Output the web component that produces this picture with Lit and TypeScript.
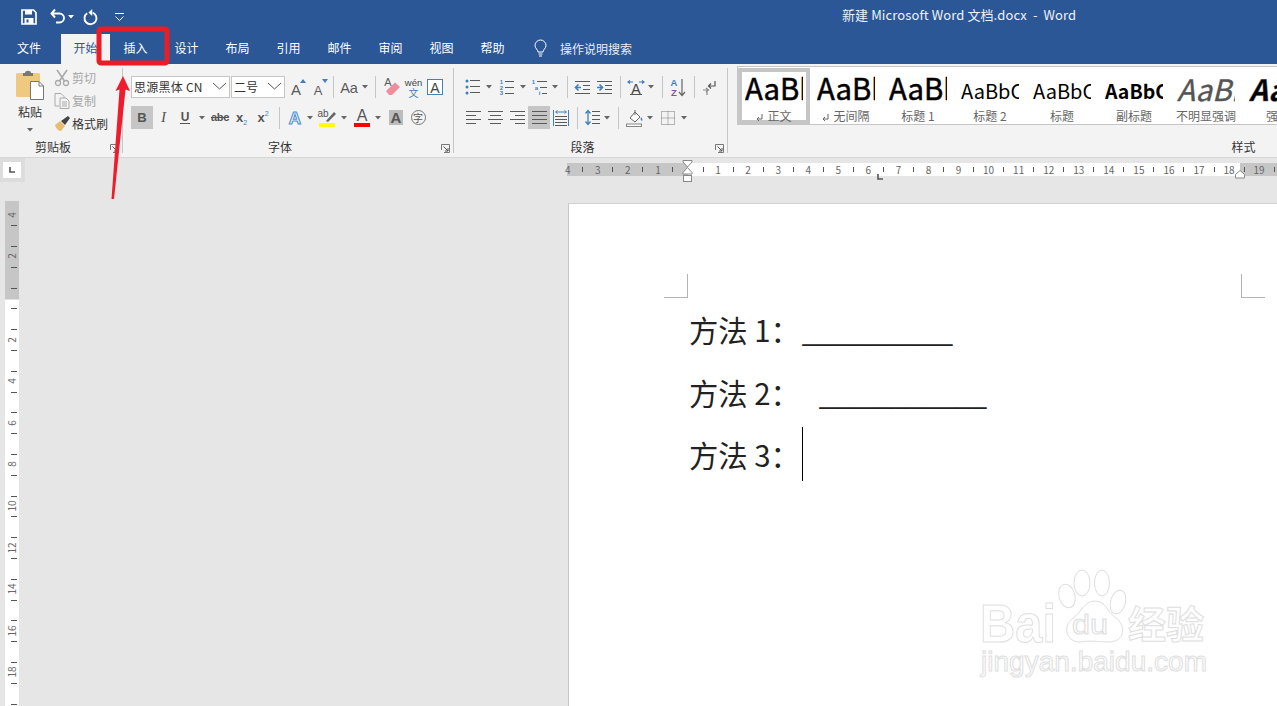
import { LitElement, html, css, svg } from 'lit';
import { customElement } from 'lit/decorators.js';

const G = '#5a5a5a';
const B = '#3f7fbf';

// every ribbon button is a fixed cell with a centred svg inside
const icon = (w: number, h: number, body: unknown) =>
  html`<svg width=${w} height=${h} viewBox="0 0 ${w} ${h}">${body}</svg>`;

const letter = (t: string, x: number, y: number, size: number, fill = G, extra = '') =>
  svg`<text x=${x} y=${y} font-size=${size} fill=${fill} font-family="Liberation Sans, sans-serif" text-anchor="middle" style=${extra}>${t}</text>`;

const lines = (x1: number, x2: number, ys: number[], color = G) =>
  ys.map((y) => svg`<path d="M${x1} ${y}.5H${x2}" stroke=${color} fill="none"/>`);

const launcher = html`<svg class="launch" width="9" height="9" viewBox="0 0 9 9">
  <path d="M.5 6V.5H8.5M8.5 .5V8.5H3" fill="none" stroke="#777"/><path d="M2.5 2.5L7 7M7 4V7H4" fill="none" stroke="#555"/>
</svg>`;

const caret = html`<svg width="6" height="4" viewBox="0 0 6 4"><path d="M0 0H6L3 3.5Z" fill="#666"/></svg>`;
const chevron = html`<svg width="15" height="8" viewBox="0 0 15 8"><path d="M1 1L7.5 7L14 1" fill="none" stroke="#555"/></svg>`;
const enterMark = html`<svg class="ret" width="7" height="8" viewBox="0 0 7 8"><path d="M6 0V5H1M3 3L1 5L3 7" fill="none" stroke="#666"/></svg>`;

const ic = {
  grow: icon(18, 20, [letter('A', 7, 18, 15), svg`<path d="M11 6L14 2L17 6Z" fill=${B}/>`]),
  shrink: icon(18, 20, [letter('A', 7, 18, 13), svg`<path d="M11 2L14 6L17 2Z" fill=${B}/>`]),
  aa: icon(18, 18, letter('Aa', 9, 15, 14.5)),
  eraser: icon(18, 22, [
    letter('A', 5, 10, 11),
    svg`<path d="M3 15L12 6.5L17 11L9 19H6Z" fill="#ee8d9e"/>`,
  ]),
  wen: html`<span class="wen"><i>wén</i><b>文</b></span>`,
  box: icon(17, 17, [
    svg`<rect x=".5" y=".5" width="15" height="15" fill="#fff" stroke="#4a7fb0"/>`,
    letter('A', 8, 13.5, 14, '#444'),
  ]),
  bold: html`<span class="t bold">B</span>`,
  ital: html`<span class="t ital">I</span>`,
  under: html`<span class="t und">U</span>`,
  abc: html`<span class="t strike">abc</span>`,
  sub: html`<span class="t script"><b>x</b><i class="lo">2</i></span>`,
  sup: html`<span class="t script"><b>x</b><i class="hi">2</i></span>`,
  effect: icon(18, 18, svg`<text x="9" y="15" font-size="17" font-weight="700" text-anchor="middle" font-family="Liberation Sans, sans-serif" fill="#fff" stroke="#4d8fd6" stroke-width="1.1">A</text>`),
  high: icon(18, 20, [
    letter('ab', 5, 9, 10, '#555'),
    svg`<path d="M8 13L16 4L18 6L10 14Z" fill="#666"/>`,
    svg`<rect x="1" y="15" width="16" height="4" fill="#ffff00"/>`,
  ]),
  color: icon(18, 20, [letter('A', 9, 13, 16, '#555'), svg`<rect x="1" y="15" width="16" height="4" fill="#ff0000"/>`]),
  shade: icon(14, 15, [svg`<rect width="14" height="15" fill="#bcbcbc"/>`, letter('A', 7, 13, 15, '#555', 'font-weight:700')]),
  circle: html`<span class="enc">字</span>`,
  bullets: icon(16, 16, [
    [2, 8, 14].map((y) => svg`<circle cx="2" cy=${y} r="1.5" fill=${B}/>`),
    lines(5, 15, [1, 7, 13]),
  ]),
  numbers: icon(16, 16, [
    ['1', '2', '3'].map((n, i) => letter(n, 2.5, 5 + i * 5.5, 6, B, 'font-weight:700')),
    lines(6, 15, [2, 8, 14]),
  ]),
  multi: icon(17, 16, [
    letter('1', 2.5, 5, 6, B, 'font-weight:700'),
    letter('a', 5.5, 10.5, 6, B, 'font-weight:700'),
    letter('i', 8.5, 16, 6, B, 'font-weight:700'),
    lines(6, 16, [2]),
    lines(9, 16, [8]),
    lines(11, 16, [14]),
  ]),
  outdent: icon(17, 13, [
    lines(1, 16, [0, 12]),
    lines(9, 16, [4, 8]),
    svg`<path d="M7 6.5H1.5M4.5 3.5L1.5 6.5L4.5 9.5" fill="none" stroke=${B} stroke-width="1.6"/>`,
  ]),
  indent: icon(17, 13, [
    lines(1, 16, [0, 12]),
    lines(9, 16, [4, 8]),
    svg`<path d="M1 6.5H6.5M3.5 3.5L6.5 6.5L3.5 9.5" fill="none" stroke=${B} stroke-width="1.6"/>`,
  ]),
  cjk: icon(18, 15, [
    svg`<path d="M6 2H1.5M3 .5L1 2L3 3.5M12 2H16.5M15 .5L17 2L15 3.5" fill="none" stroke=${B} stroke-width="1.2"/>`,
    letter('A', 9, 14, 14, '#444', 'font-weight:400'),
    svg`<path d="M3 14.5H15" stroke="#555"/>`,
  ]),
  sort: icon(18, 19, [
    letter('A', 5, 8, 9.5, B, 'font-weight:700'),
    letter('Z', 5, 18, 9.5, '#8a4fb5', 'font-weight:700'),
    svg`<path d="M13 1V17M10 14L13 17.5L16 14" fill="none" stroke="#666" stroke-width="1.2"/>`,
  ]),
  para: icon(14, 15, [
    svg`<path d="M13 1V6H7M9 3.5L6.5 6L9 8.5" fill="none" stroke="#555" stroke-width="1.2"/>`,
    svg`<path d="M1 10H6M4 8L6.5 10L4 12M5 11V15" fill="none" stroke="#888" stroke-width="1.2"/>`,
  ]),
  left: icon(15, 14, [lines(0, 15, [0, 8]), lines(0, 10, [4, 12])]),
  center: icon(15, 14, [lines(0, 15, [0, 8]), lines(2, 13, [4, 12])]),
  right: icon(15, 14, [lines(0, 15, [0, 8]), lines(5, 15, [4, 12])]),
  just: icon(15, 14, lines(0, 15, [0, 4, 8, 12])),
  dist: icon(16, 16, [
    svg`<path d="M.5 0V16M15.5 0V16" stroke=${B}/><path d="M3 2H13M4.5 .5L2.5 2L4.5 3.5M11.5 .5L13.5 2L11.5 3.5" fill="none" stroke=${B}/>`,
    lines(2, 14, [6, 9, 12, 15]),
  ]),
  spacing: icon(15, 17, [
    svg`<path d="M3 2V15M.5 4.5L3 1.5L5.5 4.5M.5 12.5L3 15.5L5.5 12.5" fill="none" stroke=${B} stroke-width="1.3"/>`,
    lines(7, 15, [2, 6, 10, 14]),
  ]),
  fill: icon(17, 18, [
    svg`<path d="M4 9L9 3L14 8L9 13Z" fill="#fff" stroke="#666"/><path d="M9 1L9 6" stroke="#666"/><path d="M15 8C16.5 10 17 11 15.7 12C14.5 11 14.5 10 15 8Z" fill=${B}/>`,
    svg`<rect x=".5" y="15" width="15" height="2.5" fill="#fff" stroke="#888"/>`,
  ]),
  borders: icon(14, 14, svg`<rect x=".5" y=".5" width="13" height="13" fill="none" stroke="#777" stroke-dasharray="1 1"/><path d="M7 .5V13.5M.5 7H13.5" stroke="#777" stroke-dasharray="1 1"/>`),
};

type Cell = [number, unknown, number?, boolean?]; // width, content, margin-left, pressed

const fontTop: Cell[] = [
  [22, ic.grow, 2], [22, ic.shrink], [0, null, 2], [22, ic.aa, 4], [9, caret], [0, null, 6],
  [22, ic.eraser, 5], [21, ic.wen], [22, ic.box],
];
const fontBottom: Cell[] = [
  [22, ic.bold, 0, true], [21, ic.ital], [22, ic.under], [11, caret], [22, ic.abc, 2], [21, ic.sub], [22, ic.sup],
  [0, null, 5], [22, ic.effect, 4], [8, caret], [22, ic.high, 2], [10, caret, 1], [22, ic.color, 2], [10, caret],
  [22, ic.shade, 2], [22, ic.circle],
];
const paraTop: Cell[] = [
  [22, ic.bullets], [10, caret], [22, ic.numbers, 2], [10, caret], [22, ic.multi], [10, caret], [0, null, 7],
  [22, ic.outdent, 3], [22, ic.indent], [0, null, 5], [22, ic.cjk, 4], [8, caret], [0, null, 7], [22, ic.sort, 4],
  [0, null, 5], [22, ic.para, 3],
];
const paraBottom: Cell[] = [
  [22, ic.left], [22, ic.center], [22, ic.right], [22, ic.just, 0, true], [22, ic.dist], [0, null, 5],
  [22, ic.spacing, 3], [8, caret], [0, null, 7], [22, ic.fill, 4], [10, caret], [22, ic.borders, 2], [10, caret],
];

const styleItems = [
  { label: '正文', cls: 'big', mark: true, on: true },
  { label: '无间隔', cls: 'big', mark: true },
  { label: '标题 1', cls: 'big' },
  { label: '标题 2', cls: 'mid' },
  { label: '标题', cls: 'mid' },
  { label: '副标题', cls: 'mid strong' },
  { label: '不明显强调', cls: 'soft' },
  { label: '强调', cls: 'soft loud' },
];

const tabs = ['插入', '设计', '布局', '引用', '邮件', '审阅', '视图', '帮助'];
const hNums = [
  ...[4, 3, 2, 1].map((n) => ({ n, at: -n })),
  ...Array.from({ length: 19 }, (_, i) => ({ n: i + 1, at: i + 1 })),
];
const vNums = [-4, -2, 2, 4, 6, 8, 10, 12, 14, 16, 18];

@customElement('app-root')
export class AppRoot extends LitElement {
  static styles = css`
    :host {
      display: block;
      position: relative;
      width: 1277px;
      height: 706px;
      overflow: hidden;
      background: #e6e6e6;
      font-family: 'Noto Sans CJK SC', 'Noto Sans', sans-serif;
      font-size: 12px;
      color: #444;
    }
    svg { display: block; overflow: visible; }

    .title { display: flex; align-items: center; height: 33px; background: #2b5797; padding-left: 20px; color: #fff; }
    .qat-save { margin-left: 1px; }
    .qat-undo { margin-left: 13px; }
    .qat-caret { margin-left: 3px; }
    .qat-redo { margin-left: 9px; }
    .qat-more { margin-left: 17px; }
    .doc-name { position: relative; top: -2px; margin-left: 718px; font-size: 13px; letter-spacing: .1px; white-space: pre; color: #eef2f8; }

    .tabs { display: flex; height: 31px; background: #2b5797; color: #fff; }
    .tab { display: flex; align-items: center; justify-content: center; width: 51px; height: 30px; margin-top: 1px; padding-bottom: 3px; box-sizing: border-box; }
    .tab.file { width: 61px; padding-right: 3px; }
    .tab.home { width: 49px; background: #f3f3f3; color: #2b5797; }
    .bulb { margin-left: 16px; align-self: center; }
    .search { margin-left: 13px; align-self: center; color: #e8edf5; }

    .ribbon { display: flex; height: 93px; background: #f3f3f3; border-bottom: 1px solid #d6d6d6; overflow: hidden; }
    .group { position: relative; flex: none; display: flex; flex-direction: column; margin: 4px 0; box-sizing: border-box; border-right: 1px solid #c6c6c6; }
    .clip { width: 123px; }
    .font { width: 331px; padding-left: 8px; }
    .para { width: 274px; padding-left: 8px; }
    .styles { width: 1046px; padding-left: 9px; border-right: none; }
    .label { margin-top: auto; height: 17px; box-sizing: border-box; padding: 5px 16px 0 0; line-height: 12px; text-align: center; color: #333; }
    .font .label, .para .label, .styles .label { padding-right: 24px; }
    .launch { position: absolute; right: 3px; bottom: 0; }

    .clip-body { display: flex; margin-top: -2px; }
    .paste { display: flex; flex-direction: column; align-items: center; width: 32px; margin: 4px 0 0 14px; color: #333; }
    .paste span { margin-top: 3px; line-height: 18px; }
    .paste svg:last-child { margin-top: 7px; }
    .small { margin-left: 8px; }
    .small div { display: flex; align-items: center; height: 23px; color: #a6a6a6; }
    .small div svg { width: 18px; }
    .small .on { color: #333; }

    .row { display: flex; align-items: center; height: 22px; }
    .row.first { margin-top: 8px; }
    .row.second { margin-top: 8px; height: 23px; }
    .select { display: flex; align-items: center; justify-content: space-between; box-sizing: border-box; height: 22px; background: #fff; border: 1px solid #c6c6c6; padding: 0 2px 2px 2px; color: #333; white-space: nowrap; }
    .select.name { width: 99px; letter-spacing: .25px; }
    .select.size { width: 54px; margin-left: 1px; }
    .cell { display: flex; align-items: center; justify-content: center; flex: none; height: 100%; }
    .cell.on { background: #c6c6c6; }
    .sep { flex: none; width: 1px; height: 22px; background: #c6c6c6; }

    .t { font-family: 'Liberation Sans', sans-serif; color: #555; line-height: 1; }
    .bold { font-weight: 700; font-size: 13px; }
    .ital { font-family: 'Liberation Serif', serif; font-style: italic; font-size: 15px; }
    .und { font-weight: 700; font-size: 12px; border-bottom: 1px solid #555; padding: 0 1px; }
    .strike { font-size: 11px; font-weight: 700; text-decoration: line-through; letter-spacing: -.3px; }
    .script b { font-size: 13px; }
    .script i { font-size: 7px; font-style: normal; color: #3f7fbf; position: relative; }
    .script .lo { top: 3px; }
    .script .hi { top: -6px; }
    .wen { display: flex; flex-direction: column; align-items: center; line-height: 10px; }
    .wen i { font: 9.5px 'Liberation Sans', sans-serif; color: #444; }
    .wen b { font-size: 10px; font-weight: 400; color: #3f7fbf; }
    .enc { display: flex; align-items: center; justify-content: center; box-sizing: border-box; width: 15px; height: 15px; border: 1px solid #777; border-radius: 50%; font-size: 10px; color: #555; }

    .gallery { display: flex; height: 59px; box-sizing: border-box; margin-top: -2px; padding-top: 1px; background: #fff; border: 1px solid #c6c6c6; border-right: none; }
    .style { box-sizing: border-box; flex: none; width: 72px; height: 56px; padding: 0 0 0 3px; border: 4px solid transparent; }
    .style.on { border-color: #c6c6c6; }
    .preview { width: 58px; height: 37px; overflow: hidden; white-space: nowrap; color: #000; line-height: 30px; font-size: 29.3px; }
    .preview.big { -webkit-text-stroke: .5px #000; }
    .preview.mid { font-size: 20px; line-height: 37px; }
    .preview.strong { font-weight: 700; font-size: 19.5px; }
    .preview.soft { font-style: italic; font-size: 29.3px; color: #555; line-height: 32px; -webkit-text-stroke: .4px #555; }
    .preview.loud { color: #000; font-weight: 700; }
    .cap { display: flex; align-items: center; justify-content: center; gap: 4px; height: 14px; margin-left: -3px; color: #666; line-height: 14px; white-space: nowrap; }
    .ret { margin-top: 3px; }

    .work { display: flex; height: 548px; }
    .side { flex: none; width: 567px; }
    .corner-row { height: 43px; }
    .corner { display: flex; box-sizing: border-box; width: 25px; height: 24px; padding: 4px 4px 4px 3px; background: #dcdcdc; }
    .corner span { flex: 1; background: #fff; display: flex; align-items: center; justify-content: center; }
    .vruler { position: relative; width: 14px; height: 505px; margin-left: 5px; background: linear-gradient(#c6c6c6 98px, #fff 99px); overflow: hidden; }
    .vtick { position: absolute; left: 6px; width: 6px; height: 1px; background: #555; }
    .vnum { position: absolute; left: 0; width: 14px; height: 12px; line-height: 12px; margin-top: -6px; text-align: center; font-size: 10px; color: #666; transform: rotate(-90deg); }

    .main { flex: none; width: 710px; display: flex; flex-direction: column; }
    .hruler-wrap { flex: none; height: 45px; box-sizing: border-box; padding-top: 5px; }
    .hruler { position: relative; height: 13px; background: linear-gradient(90deg, #c6c6c6 121px, #fff 121px, #fff 673px, #c6c6c6 673px); }
    .htick { position: absolute; top: 4px; width: 1px; height: 5px; background: #555; }
    .hnum { position: absolute; top: 0; width: 16px; margin-left: -8px; text-align: center; line-height: 13px; font-size: 10px; color: #666; }
    .marker { position: absolute; }

    .page { position: relative; flex: 1; margin-left: 1px; box-sizing: border-box; padding: 94px 0 0 120px; background: #fff; border-left: 1px solid #c6c6c6; border-top: 1px solid #d0d0d0; font-size: 29.33px; line-height: 62.7px; color: #222; }
    .line { white-space: pre; }
    .crop { position: absolute; top: 70px; width: 23px; height: 23px; border-bottom: 1px solid #b4b4b4; }
    .crop.l { left: 95px; border-right: 1px solid #b4b4b4; }
    .crop.r { left: 672px; border-left: 1px solid #b4b4b4; }
    .blank.one { margin-left: 2px; letter-spacing: -1.4px; }
    .blank.two { margin-left: 19px; letter-spacing: -1.2px; }
    .cursor { display: inline-block; width: 1px; height: 54px; margin-left: 2px; background: #000; vertical-align: -14px; }

    .mark { position: absolute; left: 0; top: 0; pointer-events: none; }
  `;

  #cells(list: Cell[]) {
    return list.map(([w, content, ml, on]) =>
      content === null
        ? html`<div class="sep" style="margin-left:${ml}px"></div>`
        : html`<div class="cell ${on ? 'on' : ''}" style="width:${w}px;margin-left:${ml ?? 0}px">${content}</div>`
    );
  }

  #titleBar() {
    return html`<div class="title">
      <svg class="qat-save" width="16" height="16" viewBox="0 0 16 16">
        <path d="M1 1H12.5L15 3.5V15H1Z" fill="none" stroke="#fff" stroke-width="1.7"/>
        <rect x="4" y="1" width="7" height="4.5" fill="#fff"/>
        <rect x="3.5" y="9" width="9" height="6" fill="#fff"/>
        <rect x="5.5" y="10.5" width="2" height="3" fill="#2b5797"/>
      </svg>
      <svg class="qat-undo" width="15" height="15" viewBox="0 0 15 15">
        <path d="M5 .5L1.5 4.5L5 8.5M2 4.5H9.5A4.5 4.5 0 0 1 9.5 13.5H6" fill="none" stroke="#fff" stroke-width="1.9"/>
      </svg>
      <svg class="qat-caret" width="6" height="4" viewBox="0 0 6 4"><path d="M0 0H6L3 3.5Z" fill="#fff"/></svg>
      <svg class="qat-redo" width="15" height="16" viewBox="0 0 15 16">
        <path d="M9.6 3.6A6 6 0 1 1 4.2 4.2" fill="none" stroke="#fff" stroke-width="1.9"/>
        <path d="M9.2 0V7L5.5 3.6Z" fill="#fff"/>
      </svg>
      <svg class="qat-more" width="9" height="8" viewBox="0 0 9 8"><path d="M0 .5H9" stroke="#fff"/><path d="M.5 3.5L4.5 7.5L8.5 3.5" fill="none" stroke="#fff"/></svg>
      <div class="doc-name">新建 Microsoft Word 文档.docx  -  Word</div>
    </div>`;
  }

  #tabBar() {
    return html`<div class="tabs">
      <div class="tab file">文件</div>
      <div class="tab home">开始</div>
      ${tabs.map((t) => html`<div class="tab">${t}</div>`)}
      <svg class="bulb" width="13" height="17" viewBox="0 0 13 17">
        <path d="M4 12C4 9.5 1 8.5 1 5.5A5.5 5.5 0 0 1 12 5.5C12 8.5 9 9.5 9 12Z" fill="none" stroke="#fff"/>
        <path d="M4.5 14H8.5M5 16H8" stroke="#fff"/>
      </svg>
      <div class="search">操作说明搜索</div>
    </div>`;
  }

  #ribbon() {
    return html`<div class="ribbon">
      <div class="group clip">
        <div class="clip-body">
          <div class="paste">
            <svg width="28" height="30" viewBox="0 0 28 30">
              <rect x="0" y="3" width="24" height="24" rx="1.5" fill="#efc97f"/>
              <path d="M7 3H9C9 0 15 0 15 3H17V6H7Z" fill="#777"/>
              <path d="M14.5 11.5H23L27.5 16V29.5H14.5Z" fill="#fff" stroke="#777"/>
              <path d="M23 11.5V16H27.5" fill="none" stroke="#777"/>
            </svg>
            <span>粘贴</span>
            ${caret}
          </div>
          <div class="small">
            <div>
              <svg height="16" viewBox="0 0 18 16">
                <circle cx="4" cy="13" r="2.5" fill="none" stroke="#aaa" stroke-width="1.3"/>
                <circle cx="12" cy="13" r="2.5" fill="none" stroke="#aaa" stroke-width="1.3"/>
                <path d="M3 0L10.5 11M13 0L5.5 11" stroke="#aaa" stroke-width="1.6"/>
              </svg>剪切
            </div>
            <div>
              <svg height="16" viewBox="0 0 18 16">
                <path d="M1 .5H7L10 3.5V5M1 .5V13H5" fill="none" stroke="#aaa"/>
                <path d="M6 5H12L15 8V15.5H6Z" fill="none" stroke="#aaa"/>
                <path d="M8 9H13M8 11H13M8 13H13" stroke="#aaa"/>
              </svg>复制
            </div>
            <div class="on">
              <svg height="16" viewBox="0 0 18 16">
                <path d="M1 9L6 5L11 10L7 15C5 15 2 13 1 9Z" fill="#e8bd72"/>
                <path d="M7 5L14 0L16 2L11 9Z" fill="#444"/>
              </svg>格式刷
            </div>
          </div>
        </div>
        <div class="label">剪贴板</div>
        ${launcher}
      </div>

      <div class="group font">
        <div class="row first">
          <div class="select name"><span>思源黑体 CN</span>${chevron}</div>
          <div class="select size"><span>二号</span>${chevron}</div>
          ${this.#cells(fontTop)}
        </div>
        <div class="row second">${this.#cells(fontBottom)}</div>
        <div class="label">字体</div>
        ${launcher}
      </div>

      <div class="group para">
        <div class="row first">${this.#cells(paraTop)}</div>
        <div class="row second">${this.#cells(paraBottom)}</div>
        <div class="label">段落</div>
        ${launcher}
      </div>

      <div class="group styles">
        <div class="gallery">
          ${styleItems.map(
            (s) => html`<div class="style ${s.on ? 'on' : ''}">
              <div class="preview ${s.cls}">AaBbCcDd</div>
              <div class="cap">${s.mark ? enterMark : ''}${s.label}</div>
            </div>`
          )}
        </div>
        <div class="label">样式</div>
      </div>
    </div>`;
  }

  #hRuler() {
    const zero = 120.5;
    const step = 30.06;
    const ticks = Array.from({ length: 24 }, (_, i) => zero + (i - 4 + 0.5) * step);
    return html`<div class="hruler-wrap">
      <div class="hruler">
        ${ticks.map((x) => html`<div class="htick" style="left:${x}px"></div>`)}
        ${hNums.map((h) => html`<div class="hnum" style="left:${zero + h.at * step + 0.5}px">${h.n}</div>`)}
        <svg class="marker" style="left:114px;top:-3px" width="13" height="25" viewBox="0 0 13 25">
          <path d="M2 .5H11V2L6.5 7L2 2Z" fill="#fff" stroke="#888"/>
          <path d="M6.5 7.5L11 12.5V14H2V12.5Z" fill="#fff" stroke="#888"/>
          <rect x="2.5" y="15.5" width="8" height="6" fill="#fff" stroke="#888"/>
        </svg>
        <svg class="marker" style="left:310px;top:11px" width="7" height="6" viewBox="0 0 7 6"><path d="M1 0V5H6" fill="none" stroke="#555" stroke-width="1.6"/></svg>
        <svg class="marker" style="left:667px;top:7px" width="12" height="9" viewBox="0 0 12 9"><path d="M6 .5L10.5 4.5V8H1.5V4.5Z" fill="#fff" stroke="#888"/></svg>
      </div>
    </div>`;
  }

  #vRuler() {
    const zero = 97;
    const step = 20.8;
    const ticks = Array.from({ length: 24 }, (_, i) => zero + (i - 4 + 0.5) * step);
    return html`<div class="vruler">
      ${ticks.map((y) => html`<div class="vtick" style="top:${y}px"></div>`)}
      ${vNums.map((n) => html`<div class="vnum" style="top:${zero + n * step}px">${Math.abs(n)}</div>`)}
    </div>`;
  }

  // red annotation and the pale site watermark both sit on top of the screenshot
  #overlays() {
    return html`<svg class="mark" width="1277" height="706" viewBox="0 0 1277 706">
      <rect x="99" y="29" width="68" height="34" rx="2" fill="none" stroke="#ed1c24" stroke-width="5"/>
      <path d="M123 76L130 91L125.5 89.5L114 199L111.5 199L119.5 89.5L115.5 91Z" fill="#ee1c2c"/>
      <g fill="#fff" stroke="#dedede" stroke-width="1">
        <text x="980" y="642" font-size="54" font-weight="700" font-family="Liberation Sans, sans-serif" textLength="76" lengthAdjust="spacingAndGlyphs">Bai</text>
        <ellipse cx="1067" cy="596" rx="8" ry="12" transform="rotate(-15 1067 596)"/>
        <ellipse cx="1082" cy="583" rx="8" ry="13"/>
        <ellipse cx="1102" cy="583" rx="7.5" ry="13"/>
        <ellipse cx="1118" cy="602" rx="7.5" ry="12" transform="rotate(15 1118 602)"/>
        <path d="M1095 601C1106 601 1107 612 1116 618C1125 624 1127 642 1108 642C1100 642 1090 640 1080 642C1066 642 1062 626 1073 618C1082 612 1084 601 1095 601Z"/>
        <text x="1072" y="634" font-size="27" font-family="Liberation Sans, sans-serif" textLength="36" lengthAdjust="spacingAndGlyphs">du</text>
        <text x="1128" y="638" font-size="38" font-weight="700" font-family="Noto Sans CJK SC, sans-serif">经验</text>
        <text x="981" y="671" font-size="27" font-family="Liberation Sans, sans-serif" textLength="226" lengthAdjust="spacingAndGlyphs">jingyan.baidu.com</text>
      </g>
    </svg>`;
  }

  render() {
    return html`
      ${this.#titleBar()}
      ${this.#tabBar()}
      ${this.#ribbon()}
      <div class="work">
        <div class="side">
          <div class="corner-row">
            <div class="corner"><span>
              <svg width="6" height="6" viewBox="0 0 6 6"><path d="M1 0V5H6" fill="none" stroke="#555" stroke-width="1.6"/></svg>
            </span></div>
          </div>
          ${this.#vRuler()}
        </div>
        <div class="main">
          ${this.#hRuler()}
          <div class="page">
            <div class="crop l"></div>
            <div class="crop r"></div>
            <div class="line">方法 1：<span class="blank one">__________</span></div>
            <div class="line">方法 2：<span class="blank two">___________</span></div>
            <div class="line">方法 3：<span class="cursor"></span></div>
          </div>
        </div>
      </div>
      ${this.#overlays()}
    `;
  }
}
